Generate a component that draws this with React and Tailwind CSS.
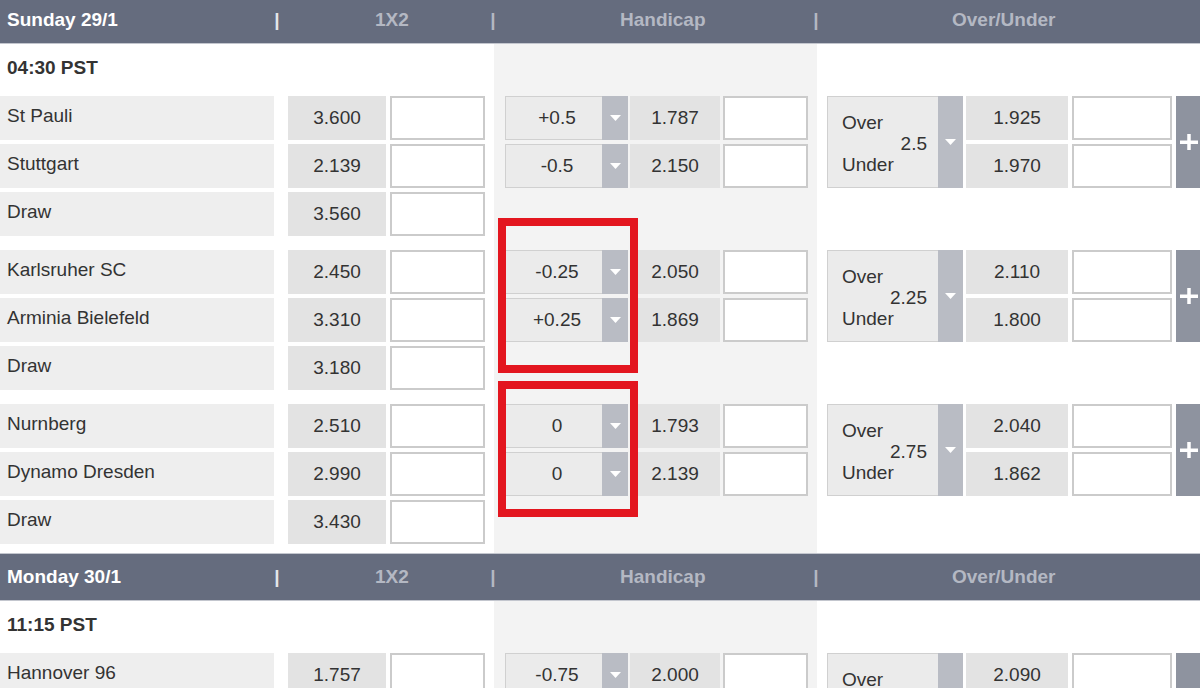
import React from "react";

const sections = [
  {
    day: "Sunday 29/1",
    time: "04:30 PST",
    first: true,
    groups: [
      {
        rows: [["St Pauli", "3.600"], ["Stuttgart", "2.139"], ["Draw", "3.560"]],
        hc: [["+0.5", "1.787"], ["-0.5", "2.150"]],
        ou: { line: "2.5", over: "1.925", under: "1.970" },
      },
      {
        rows: [["Karlsruher SC", "2.450"], ["Arminia Bielefeld", "3.310"], ["Draw", "3.180"]],
        hc: [["-0.25", "2.050"], ["+0.25", "1.869"]],
        ou: { line: "2.25", over: "2.110", under: "1.800" },
      },
      {
        rows: [["Nurnberg", "2.510"], ["Dynamo Dresden", "2.990"], ["Draw", "3.430"]],
        hc: [["0", "1.793"], ["0", "2.139"]],
        ou: { line: "2.75", over: "2.040", under: "1.862" },
      },
    ],
  },
  {
    day: "Monday 30/1",
    time: "11:15 PST",
    first: false,
    groups: [
      {
        rows: [["Hannover 96", "1.757"]],
        hc: [["-0.75", "2.000"]],
        ou: { line: "", over: "2.090", under: "" },
      },
    ],
  },
];

function Arrow() {
  return (
    <svg width="11" height="6" viewBox="0 0 11 6">
      <path d="M0 0H11L5.5 6Z" fill="#ffffff" />
    </svg>
  );
}

function Header({ day, first }) {
  return (
    <div
      className={
        "flex h-[48px] items-center bg-[#656c7e] border-t border-b border-[#c3c6ce] font-bold " +
        (first ? "-mt-[4px]" : "")
      }
    >
      <div className="w-[274px] shrink-0 pl-[7px] text-white">{day}</div>
      <div className="w-[6px] shrink-0 text-center text-[#e4e6ea]">|</div>
      <div className="w-[210px] shrink-0 pl-[95px] text-[#b4b8c3]">1X2</div>
      <div className="w-[6px] shrink-0 text-center text-[#b4b8c3]">|</div>
      <div className="w-[317px] shrink-0 pl-[124px] text-[#b4b8c3]">Handicap</div>
      <div className="w-[6px] shrink-0 text-center text-[#b4b8c3]">|</div>
      <div className="flex-1 pl-[133px] text-[#b4b8c3]">Over/Under</div>
    </div>
  );
}

function Input({ w }) {
  return <div className={"h-[44px] bg-white border-2 border-[#cbcbcb] " + w}></div>;
}

function Section({ s }) {
  return (
    <div>
      <Header day={s.day} first={s.first} />
      <div className="flex">
        {/* 1X2 column */}
        <div className="w-[494px] shrink-0 pb-[9px]">
          <div className="h-[52px] flex items-center pl-[7px] pb-[4px] font-bold text-[#333333]">{s.time}</div>
          <div className="flex flex-col gap-[14px]">
            {s.groups.map((g, gi) => (
              <div key={gi} className="flex flex-col gap-[4px]">
                {g.rows.map(([name, odd], ri) => (
                  <div key={ri} className="flex h-[44px]">
                    <div className="w-[274px] shrink-0 bg-[#eeeeee] flex items-center pl-[7px] pb-[3px] text-[#333333]">
                      {name}
                    </div>
                    <div className="ml-[14px] w-[98px] shrink-0 bg-[#e3e3e3] flex items-center justify-center text-[#333333]">
                      {odd}
                    </div>
                    <Input w="ml-[4px] w-[95px] shrink-0" />
                  </div>
                ))}
              </div>
            ))}
          </div>
        </div>

        {/* Handicap column */}
        <div className="w-[323px] shrink-0 bg-[#f3f3f3] pt-[52px] pb-[9px]">
          <div className="flex flex-col gap-[14px]">
            {s.groups.map((g, gi) => (
              <div key={gi} className="flex flex-col gap-[4px] h-[140px]">
                {g.hc.map(([line, odd], ri) => (
                  <div key={ri} className="flex h-[44px] pl-[11px]">
                    <div className="w-[97px] shrink-0 bg-[#ebebeb] border border-r-0 border-[#d0d0d0] flex items-center justify-center pl-[6px] text-[#333333]">
                      {line}
                    </div>
                    <div className="w-[26px] shrink-0 bg-[#b9bcc4] flex items-center justify-center">
                      <Arrow />
                    </div>
                    <div className="ml-[2px] w-[90px] shrink-0 bg-[#e3e3e3] flex items-center justify-center text-[#333333]">
                      {odd}
                    </div>
                    <Input w="ml-[3px] w-[85px] shrink-0" />
                  </div>
                ))}
              </div>
            ))}
          </div>
        </div>

        {/* Over/Under column */}
        <div className="flex-1 min-w-0 overflow-hidden pt-[52px] pb-[9px]">
          <div className="flex flex-col gap-[14px]">
            {s.groups.map((g, gi) => (
              <div key={gi} className="flex h-[140px] pl-[10px] items-start">
                <div className="flex h-[92px] shrink-0">
                  <div className="w-[111px] bg-[#ebebeb] border border-r-0 border-[#d0d0d0] flex flex-col justify-center pt-[2px] leading-[21px] text-[#333333]">
                    <div className="pl-[14px]">Over</div>
                    <div className="text-right pr-[11px] h-[21px]">{g.ou.line}</div>
                    <div className="pl-[14px]">Under</div>
                  </div>
                  <div className="w-[25px] bg-[#b9bcc4] flex items-center justify-center">
                    <Arrow />
                  </div>
                </div>
                <div className="ml-[3px] w-[102px] shrink-0 flex flex-col gap-[4px]">
                  <div className="h-[44px] bg-[#e3e3e3] flex items-center justify-center text-[#333333]">{g.ou.over}</div>
                  <div className="h-[44px] bg-[#e3e3e3] flex items-center justify-center text-[#333333]">{g.ou.under}</div>
                </div>
                <div className="ml-[4px] w-[100px] shrink-0 flex flex-col gap-[4px]">
                  <Input w="" />
                  <Input w="" />
                </div>
                <div className="ml-[4px] w-[30px] h-[92px] shrink-0 bg-[#8e939f] flex items-center pl-[4px]">
                  <svg width="18" height="16" viewBox="0 0 18 16">
                    <rect x="0" y="6.5" width="18" height="3.5" fill="#ffffff" />
                    <rect x="7.25" y="0" width="3.5" height="16" fill="#ffffff" />
                  </svg>
                </div>
              </div>
            ))}
          </div>
        </div>
      </div>
    </div>
  );
}

export default function App() {
  return (
    <div className="relative w-[1200px] h-[688px] overflow-hidden bg-white font-['Liberation_Sans',Arial,sans-serif] text-[19px]">
      {sections.map((s, i) => (
        <Section key={i} s={s} />
      ))}
      <div className="absolute left-[498px] top-[218px] w-[140px] h-[155px] border-[8px] border-[#e3161f]"></div>
      <div className="absolute left-[498px] top-[381px] w-[140px] h-[136px] border-[8px] border-[#e3161f]"></div>
    </div>
  );
}
